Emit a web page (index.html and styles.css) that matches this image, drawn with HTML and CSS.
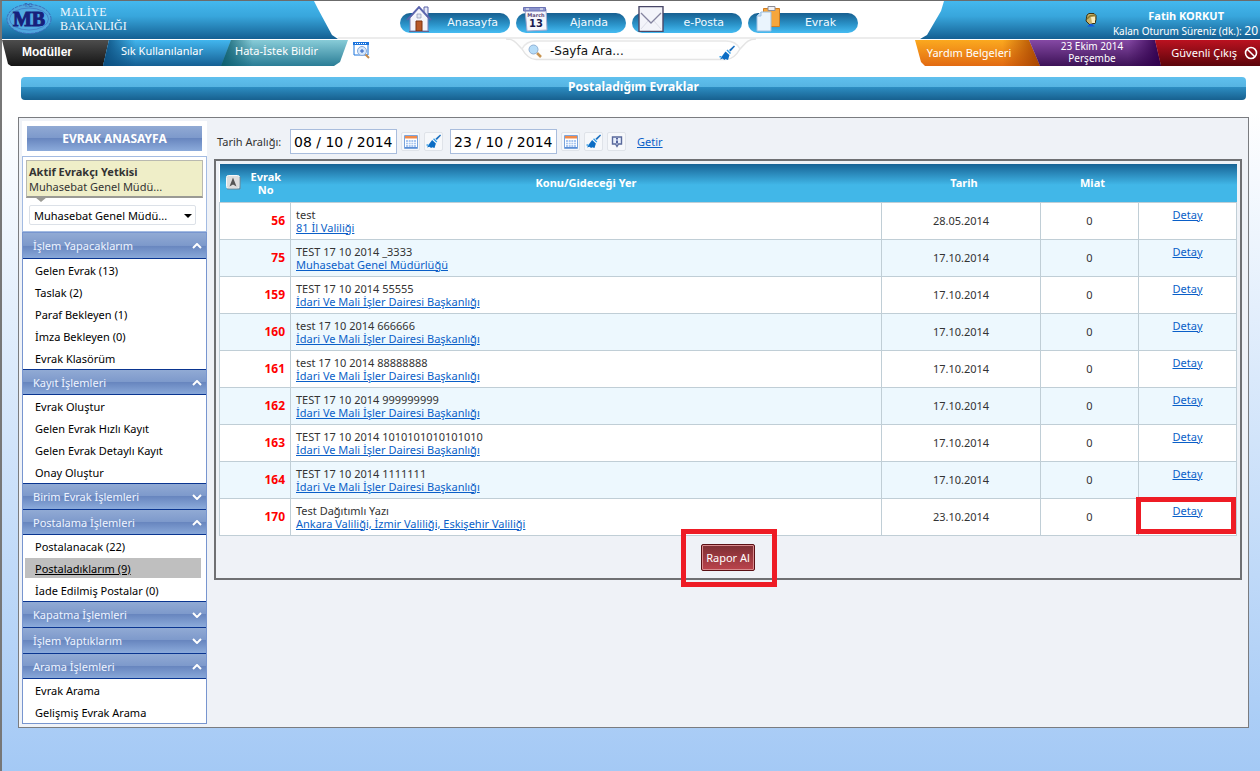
FILE: index.html
```html
<!DOCTYPE html>
<html lang="tr">
<head>
<meta charset="utf-8">
<title>Postaladığım Evraklar</title>
<link rel="stylesheet" href="styles.css">
</head>
<body>
<svg class="defs" aria-hidden="true">
  <symbol id="i-brush" viewBox="0 0 16 16"><path d="M14.500 .5l1 1-4.500 5-1.500-1.500z" fill="#1a6fc0"/><path d="M8 4.500l3.500 3.500-1 1-3.500-3.500z" fill="#2f9be8"/><path d="M6 6.500l4 3.500-1.500 5-2.500-1-1 1-2-1.500-2.500 1 2.500-4z" fill="#0a6cc4"/><path d="M0 11h2v1.500H0z" fill="#2f9be8"/></symbol>
  <symbol id="i-cal" viewBox="0 0 14 14"><path d="M.5.500h13v13H.5z" fill="#fff" stroke="#7aa4dc"/><path d="M1 1h12v2.500H1z" fill="#f08a4b"/><path d="M2 5h10v7H2z" fill="#a8c6f0"/><path d="M2 7.500h10M2 9.500h10M4.500 5v7M7 5v7M9.500 5v7" stroke="#fff" stroke-width=".7"/><path d="M1 12.500h12" stroke="#5b8ed6"/></symbol>
  <symbol id="i-up" viewBox="0 0 10 6"><path d="M1 5l4-4 4 4" fill="none" stroke="#fff" stroke-width="2"/></symbol>
  <symbol id="i-down" viewBox="0 0 10 6"><path d="M1 1l4 4 4-4" fill="none" stroke="#fff" stroke-width="2"/></symbol>
</svg>

<header class="top">
  <div class="band">
    <div class="brand">
      <svg class="logo" viewBox="0 0 46 34" role="img" aria-label="MB"><ellipse cx="23" cy="17" rx="22" ry="14.500" fill="#4fa6de" stroke="#3a6cba" stroke-dasharray="3 1"/><ellipse cx="23" cy="17" rx="19.500" ry="11" fill="#52abe2" stroke="#3a6cba" stroke-width=".6"/><text x="23" y="24" text-anchor="middle" class="logo-text">MB</text><text x="23" y="5" text-anchor="middle" class="logo-small">T.C.</text></svg>
      <span>MALİYE<br>BAKANLIĞI</span>
    </div>
    <nav class="nav">
      <a href="#"><svg viewBox="0 0 26 26"><path d="M18 1h4v10h-4z" fill="#e4e8f8" stroke="#5a63a8"/><path d="M4 12L13 2l9 10v13H4z" fill="#f4f5fb" stroke="#7b82b8"/><path d="M1 14L13 1l12 13" fill="none" stroke="#5a63ae" stroke-width="1.800"/><path d="M10 15h6v10h-6z" fill="#b85a28" stroke="#7b3513"/><path d="M11 8h4v4h-4z" fill="#dfe5ee" stroke="#8d96b8" stroke-width=".7"/><path d="M3 25.500h20" stroke="#606894"/></svg><span>Anasayfa</span></a>
      <a href="#"><svg viewBox="0 0 26 26"><path d="M3 3h21l1 21-20 1z" fill="#f6f7fc" stroke="#a6acd0"/><path d="M1.500 1.500h22v3.500h-22z" fill="#8c94cc" stroke="#6a72b4"/><path d="M4 3h3M18 3h3" stroke="#fff"/><text x="14" y="11" text-anchor="middle" class="cal-month">March</text><text x="14" y="21" text-anchor="middle" class="cal-day">13</text></svg><span>Ajanda</span></a>
      <a href="#"><svg viewBox="0 0 26 26"><path d="M1 .500h24v25H1z" fill="#f3f4fa" stroke="#4a4868" stroke-width="1.400"/><path d="M3 7l10 10L23 7" fill="none" stroke="#8584a0" stroke-width="1.300"/><path d="M3 23l7-8M23 23l-7-8" stroke="#dcdde8"/></svg><span>e-Posta</span></a>
      <a href="#"><svg viewBox="0 0 26 26"><path d="M9.500 2.500h16v18h-16z" fill="#f6a63c" stroke="#d07d20"/><path d="M14 .500h7v4h-7z" fill="#f2f2f4" stroke="#8c8c96"/><path d="M3 10l4-4h10v19H3z" fill="#eaf4fd" stroke="#9dc0e2"/><path d="M3 10h4V6" fill="#cfe3f5" stroke="#9dc0e2"/></svg><span>Evrak</span></a>
    </nav>
    <div class="user">
      <svg viewBox="0 0 12 14"><path d="M2 2l2-1.500h5l2 2v4l-1 4H8L5 12 1 8z" fill="#c9b46a" stroke="#3a3110"/><path d="M6 4h4v6H7z" fill="#fbeec0"/><path d="M2 6l3-3 5-1" stroke="#8a7730" stroke-width="1.500" fill="none"/><path d="M2 13.500l4-3 4 3z" fill="#1557e0"/></svg>
      <div class="who"><strong>Fatih KORKUT</strong><span>Kalan Oturum Süreniz (dk.): <b>20</b></span></div>
    </div>
  </div>
  <div class="tabs">
    <div class="tabs-left">
      <a class="tab black" href="#">Modüller</a>
      <a class="tab blue" href="#">Sık Kullanılanlar</a>
      <a class="tab teal" href="#">Hata-İstek Bildir</a>
      <button class="plain" type="button" aria-label="Yakınlaştır"><svg width="17" height="17" viewBox="0 0 17 17"><path d="M1 1h14v12H1z" fill="#fff" stroke="#1b74dd"/><path d="M0 1.500h16" stroke="#1b74dd" stroke-width="3"/><path d="M2 1.500h12" stroke="#fff" stroke-dasharray="1 1"/><circle cx="9" cy="9" r="4.500" fill="#d5e7fb" stroke="#86a9dc"/><path d="M9 7v4M7 9h4" stroke="#2b5fc0"/><path d="M12.500 12.500l3.500 3.500" stroke="#c58a4a" stroke-width="2"/></svg></button>
    </div>
    <form class="search">
      <svg class="search-shape" viewBox="0 0 250 23" preserveAspectRatio="none"><path d="M0 1c9 0 11 5 16 10 4 7 8 10.500 14 10.500h190c6 0 10-3.500 14-10.500 5-5 7-10 16-10" fill="#fdfdfd" stroke="#e4e4e4" stroke-width="1.500"/><path d="M16 11c3-6 7-8 14-8h190c7 0 11 2 14 8" fill="#fff" stroke="#e8e8e8" stroke-width="1.500"/></svg>
      <svg width="14" height="14" viewBox="0 0 14 14"><path d="M9 9l4 4" stroke="#c79350" stroke-width="2.500"/><circle cx="5.500" cy="5.500" r="4.500" fill="#b5dcf8" stroke="#8fb0d4"/></svg>
      <input type="text" value="-Sayfa Ara..." aria-label="Sayfa Ara">
      <button class="plain" type="reset" aria-label="Temizle"><svg width="17" height="16"><use href="#i-brush"/></svg></button>
    </form>
    <div class="tabs-right">
      <a class="tab orange" href="#">Yardım Belgeleri</a>
      <span class="tab purple">23 Ekim 2014<br>Perşembe</span>
      <a class="tab red" href="#">Güvenli Çıkış <svg width="14" height="14" viewBox="0 0 14 14"><circle cx="7" cy="7" r="5.500" fill="none" stroke="#fff" stroke-width="1.600"/><path d="M3 3l8 8" stroke="#fff" stroke-width="1.600"/></svg></a>
    </div>
  </div>
</header>

<h1 class="title">Postaladığım Evraklar</h1>

<main class="panel">
  <aside class="side">
    <div class="side-head"><a href="#">EVRAK ANASAYFA</a></div>
    <div class="role">
      <div class="tip"><strong>Aktif Evrakçı Yetkisi</strong><br>Muhasebat Genel Müdü...</div>
      <div class="pick"><select aria-label="Aktif Evrakçı Yetkisi"><option>Muhasebat Genel Müdü...</option></select></div>
    </div>
    <nav class="menu">
      <button type="button" class="first">İşlem Yapacaklarım<svg><use href="#i-up"/></svg></button>
      <ul><li><a href="#">Gelen Evrak (13)</a></li><li><a href="#">Taslak (2)</a></li><li><a href="#">Paraf Bekleyen (1)</a></li><li><a href="#">İmza Bekleyen (0)</a></li><li><a href="#">Evrak Klasörüm</a></li></ul>
      <button type="button">Kayıt İşlemleri<svg><use href="#i-up"/></svg></button>
      <ul><li><a href="#">Evrak Oluştur</a></li><li><a href="#">Gelen Evrak Hızlı Kayıt</a></li><li><a href="#">Gelen Evrak Detaylı Kayıt</a></li><li><a href="#">Onay Oluştur</a></li></ul>
      <button type="button">Birim Evrak İşlemleri<svg><use href="#i-down"/></svg></button>
      <button type="button">Postalama İşlemleri<svg><use href="#i-up"/></svg></button>
      <ul><li><a href="#">Postalanacak (22)</a></li><li><a class="on" href="#">Postaladıklarım (9)</a></li><li><a href="#">İade Edilmiş Postalar (0)</a></li></ul>
      <button type="button">Kapatma İşlemleri<svg><use href="#i-down"/></svg></button>
      <button type="button">İşlem Yaptıklarım<svg><use href="#i-down"/></svg></button>
      <button type="button">Arama İşlemleri<svg><use href="#i-up"/></svg></button>
      <ul><li><a href="#">Evrak Arama</a></li><li><a href="#">Gelişmiş Evrak Arama</a></li></ul>
    </nav>
  </aside>

  <section class="content">
    <form class="filter">
      <label for="from">Tarih Aralığı:</label>
      <input id="from" type="text" value="08 / 10 / 2014">
      <button class="tool" type="button" aria-label="Takvim"><svg width="14" height="14"><use href="#i-cal"/></svg></button>
      <button class="tool" type="button" aria-label="Temizle"><svg width="16" height="15"><use href="#i-brush"/></svg></button>
      <input id="to" class="second" type="text" value="23 / 10 / 2014" aria-label="Bitiş tarihi">
      <button class="tool" type="button" aria-label="Takvim"><svg width="14" height="14"><use href="#i-cal"/></svg></button>
      <button class="tool" type="button" aria-label="Temizle"><svg width="16" height="15"><use href="#i-brush"/></svg></button>
      <button class="tool" type="button" aria-label="Bilgi"><svg width="12" height="12" viewBox="0 0 12 12"><path d="M1.500 1h9v7h-3L6 10.500 4.500 8h-3z" fill="#e8effb" stroke="#5a6a9c" stroke-width="1.400"/><path d="M6 2v1.500M6 4.500v3" stroke="#2b3f86" stroke-width="1.600"/></svg></button>
      <a class="get" href="#">Getir</a>
    </form>
    <div class="box">
      <table>
        <colgroup><col class="c1"><col><col class="c3"><col class="c4"><col class="c5"></colgroup>
        <thead><tr>
          <th><div class="sort"><svg width="15" height="15" viewBox="0 0 15 15"><rect x=".5" y=".5" width="13" height="13" rx="2" fill="#dedede" stroke="#f8f8f8"/><path d="M1 14h13V2" fill="none" stroke="#6f8490"/><path d="M7 2.500l3.500 9L7 9.500l-3.500 2z" fill="#555"/></svg><span>Evrak<br>No</span></div></th>
          <th>Konu/Gideceği Yer</th><th>Tarih</th><th>Miat</th><th></th>
        </tr></thead>
        <tbody>
          <tr><td>56</td><td>test<br><a href="#">81 İl Valiliği</a></td><td>28.05.2014</td><td>0</td><td><a href="#">Detay</a></td></tr>
          <tr><td>75</td><td>TEST 17 10 2014 _3333<br><a href="#">Muhasebat Genel Müdürlüğü</a></td><td>17.10.2014</td><td>0</td><td><a href="#">Detay</a></td></tr>
          <tr><td>159</td><td>TEST 17 10 2014 55555<br><a href="#">İdari Ve Mali İşler Dairesi Başkanlığı</a></td><td>17.10.2014</td><td>0</td><td><a href="#">Detay</a></td></tr>
          <tr><td>160</td><td>test 17 10 2014 666666<br><a href="#">İdari Ve Mali İşler Dairesi Başkanlığı</a></td><td>17.10.2014</td><td>0</td><td><a href="#">Detay</a></td></tr>
          <tr><td>161</td><td>test 17 10 2014 88888888<br><a href="#">İdari Ve Mali İşler Dairesi Başkanlığı</a></td><td>17.10.2014</td><td>0</td><td><a href="#">Detay</a></td></tr>
          <tr><td>162</td><td>TEST 17 10 2014 999999999<br><a href="#">İdari Ve Mali İşler Dairesi Başkanlığı</a></td><td>17.10.2014</td><td>0</td><td><a href="#">Detay</a></td></tr>
          <tr><td>163</td><td>TEST 17 10 2014 1010101010101010<br><a href="#">İdari Ve Mali İşler Dairesi Başkanlığı</a></td><td>17.10.2014</td><td>0</td><td><a href="#">Detay</a></td></tr>
          <tr><td>164</td><td>TEST 17 10 2014 1111111<br><a href="#">İdari Ve Mali İşler Dairesi Başkanlığı</a></td><td>17.10.2014</td><td>0</td><td><a href="#">Detay</a></td></tr>
          <tr><td>170</td><td>Test Dağıtımlı Yazı<br><a href="#">Ankara Valiliği, İzmir Valiliği, Eskişehir Valiliği</a></td><td>23.10.2014</td><td>0</td><td class="marked"><a href="#">Detay</a></td></tr>
        </tbody>
      </table>
      <div class="actions"><span class="report"><button type="button">Rapor Al</button></span></div>
    </div>
  </section>
</main>
</body>
</html>
```
FILE: styles.css
```css
* { box-sizing: border-box; }
body {
  margin: 0;
  min-height: 100vh;
  border-top: 1px solid #6b6b6b;
  border-left: 2px solid #777;
  background: linear-gradient(#fff 0, #fff 110px, #a4c9f5 100%);
  font: 11px/13px "Noto Sans", "Open Sans", sans-serif;
  color: #333;
}
.defs { position: absolute; width: 0; height: 0; }
a { color: #0a5fc8; }
.plain { border: 0; padding: 0; background: none; line-height: 0; }

/* header */
.top { background: #fff; }
.band { display: flex; height: 38px; margin-bottom: 1px; }
.brand, .user { width: 336px; background: linear-gradient(#44b8ee, #38a6dc 40%, #145f92); color: #fff; }
.brand {
  display: flex; align-items: center; gap: 8px; padding: 0 0 2px 4px;
  clip-path: polygon(0 0, 312px 0, 316px 8px, 330px 34px, 100% 100%, 0 100%);
  font: 12px/14px "Liberation Serif", serif; color: #f2faff;
}
.logo { width: 46px; height: 34px; }
.logo-text { font: bold 20px "Liberation Serif", serif; fill: #17207c; stroke: #17207c; }
.logo-small { font: 5px "Liberation Sans", sans-serif; fill: #2b4f9c; }
.user {
  width: 340px; display: flex; justify-content: flex-end; gap: 16px;
  clip-path: polygon(24px 0, 100% 0, 100% 100%, 0 100%, 7px 34px, 21px 10px);
}
.user svg { width: 12px; height: 14px; margin-top: 12px; }
.who { position: relative; display: flex; flex-direction: column; justify-content: flex-end; align-items: flex-end; padding-right: 2px; line-height: 15px; white-space: nowrap; font-size: 10px; }
.who strong { padding-right: 34px; font-size: 11px; }
.who b { font-size: 12px; font-weight: normal; }
.nav { flex: 1; display: flex; justify-content: center; gap: 6px; padding-top: 12px; border-bottom: 2px solid #ececec; }
.nav a {
  display: flex; align-items: center; justify-content: space-between;
  width: 110px; height: 20px; padding: 0 12px 0 6px; border-radius: 10px;
  background: linear-gradient(#175f90, #2c96cc 60%, #46bcf2);
  color: #f1faff; text-decoration: none; font: 11px/20px "DejaVu Sans", sans-serif;
}
.nav svg { width: 26px; height: 26px; margin-top: -8px; }
.nav a:nth-child(n+2) span { padding-right: 6px; }
.nav a:nth-child(4) span { padding-right: 10px; }
.cal-month { font: bold 5px "DejaVu Sans", sans-serif; fill: #5d4b77; }
.cal-day { font: bold 10px "DejaVu Sans", sans-serif; fill: #17194e; }

.tabs { display: grid; grid-template-columns: 1fr auto 1fr; height: 26px; }
.tabs-left, .tabs-right { display: flex; }
.tabs-right { justify-content: flex-end; }
.tab { display: block; height: 26px; text-align: center; color: #fff; text-decoration: none; font-size: 12px; line-height: 22px; white-space: nowrap; }
.black { width: 107px; padding-right: 17px; background: linear-gradient(#4d4d4d, #151515); clip-path: polygon(0 0, 100% 0, 101px 100%, 9px 100%, 6px 24px); font: bold 12px/25px "Liberation Sans", sans-serif; }
.blue { width: 130px; margin-left: -6px; padding-right: 12px; font-size: 11px; background: linear-gradient(90deg, #0c4f80, transparent 25%), linear-gradient(#42b6ee, #155f93); clip-path: polygon(6px 0, 100% 0, 122px 100%, 0 100%); }
.teal { width: 127px; margin-left: -12px; padding-right: 16px; font-size: 11px; background: linear-gradient(90deg, #0e5f70, transparent 25%), linear-gradient(#88ccd8, #2a7d96); clip-path: polygon(10px 0, 100% 0, 119px 22px, 113px 100%, 0 100%); }
.tabs-left .plain { align-self: flex-start; margin: 2px 0 0 5px; }
.orange { width: 125px; padding-right: 17px; background: linear-gradient(270deg, #a84600, transparent 30%), linear-gradient(#fba91f, #e26a12); clip-path: polygon(0 0, 114px 0, 100% 100%, 10px 100%, 6px 22px); font-size: 11px; line-height: 25px; }
.purple { width: 132px; margin-left: -11px; padding-right: 6px; background: linear-gradient(270deg, #31004e, transparent 25%), linear-gradient(#8549a4, #3d1257); clip-path: polygon(0 0, 126px 0, 100% 100%, 11px 100%); font-size: 10px; line-height: 12px; }
.red { display: flex; align-items: center; justify-content: flex-end; gap: 7px; width: 105px; margin-left: -6px; padding-right: 2px; background: linear-gradient(#bb1220, #5c050b); clip-path: polygon(0 0, 100% 0, 100% 100%, 6px 100%); font-size: 11px; line-height: 26px; }
.search { position: relative; display: flex; align-items: center; width: 250px; height: 21px; padding: 0 20px 0 22px; }
.search > * { position: relative; }
.search .search-shape { position: absolute; left: 0; top: -2px; width: 100%; height: 23px; }
.search input { flex: 1; min-width: 0; margin-left: 8px; padding: 0; border: 0; background: none; font: 12px "DejaVu Sans", sans-serif; color: #111; }
.search .plain { align-self: flex-end; }

.title {
  margin: 11px 14px 0 19px; height: 23px; border-radius: 4px;
  background: linear-gradient(#5fc0ee, #56b4e2 43%, #2d8dc2 44%, #17608f);
  color: #fff; text-align: center; font-size: 12px; line-height: 20px;
}

/* panel */
.panel { display: flex; align-items: flex-start; gap: 7px; margin: 17px 11px 0 16px; padding: 3px 6px 3px 3px; border: 1px solid #7a7c80; background: #eff2f7; }
.side { width: 185px; flex: none; }
.side-head { height: 35px; padding: 5px; background: #fff; }
.side-head a, .menu button { background: linear-gradient(#91aad4, #7d99cb 48%, #6886bf 50%, #8cabdb); }
.side-head a { display: block; color: #fff; text-align: center; text-decoration: none; font-size: 12px; font-weight: bold; line-height: 25px; }
.role { height: 76px; padding: 3px; border: 1px solid #a3bbe2; background: #fff; }
.tip { position: relative; height: 38px; padding: 3px 2px; border: 1px solid #b9b9b0; border-bottom: 2px solid #9a9a94; background: #efeec8; line-height: 15px; }
.tip strong { font-size: 11px; }
.tip::after { content: ""; position: absolute; left: 8px; top: 36px; border: 6px solid transparent; border-top: 5px solid #9a9a94; border-bottom: 0; }
.pick { position: relative; margin: 7px 7px 0 3px; }
.pick select { display: block; width: 100%; height: 20px; padding: 0 4px; border: 1px solid #dce1e8; border-radius: 2px; appearance: none; background: #fff; font: inherit; color: #000; }
.pick::after { content: ""; position: absolute; right: 4px; top: 9px; border: 4px solid transparent; border-top-color: #000; border-bottom: 0; pointer-events: none; }
.menu { border: 1px solid #7795cf; border-top: 0; background: #fff; }
.menu button {
  display: flex; justify-content: space-between; align-items: center; width: 100%; height: 26px; padding: 0 4px 0 10px;
  border: 0; border-top: 1px solid #0a3590; color: #eef4ff; font: 11px/24px "Noto Sans", "Open Sans", sans-serif;
}
.menu .first { height: 27px; border-top-color: #7795cf; }
.menu button svg { width: 10px; height: 6px; }
.menu ul { margin: -1px 0 0; padding: 0 5px 0 2px; list-style: none; border-top: 1px solid #0a3590; }
.menu li { height: 22px; padding-top: 1px; }
.menu li a { display: block; height: 20px; padding-left: 10px; line-height: 22px; color: #000; text-decoration: none; }
.menu li .on { background: #bfbfbf; text-decoration: underline; }

.content { flex: 1; min-width: 0; }
.filter { display: flex; align-items: center; height: 38px; padding: 3px 0 0 3px; }
.filter label { width: 73px; white-space: nowrap; }
.filter input { width: 107px; height: 25px; padding: 0 3px; border: 1px solid #a9bddd; background: #fff; font: 14px "DejaVu Sans", sans-serif; color: #000; }
.filter .second { margin-left: 7px; }
.tool { display: flex; align-items: center; justify-content: center; width: 19px; height: 19px; margin-left: 4px; padding: 0; border: 1px solid #dfe3e9; border-radius: 2px; background: #f6f8fb; }
.get { margin-left: 11px; }
.box { border: 2px solid #6f7073; padding: 3px; }
table { width: 100%; border-collapse: collapse; table-layout: fixed; background: #fff; }
.c1 { width: 71px; } .c3 { width: 159px; } .c4 { width: 98px; } .c5 { width: 98px; }
thead { background: linear-gradient(#176294, #41b7e8 55%, #41b7e8); color: #fff; }
th { height: 38px; padding: 0; }
th:nth-child(3), th:nth-child(4) { padding-left: 6px; }
.sort { display: flex; align-items: center; gap: 10px; padding-left: 6px; }
td { height: 37px; padding: 0 5px; border: 1px solid #c0ced6; text-align: center; }
tbody tr:nth-child(even) { background: #edf8fe; }
td:first-child { text-align: right; color: #f00; font-size: 12px; font-weight: bold; }
td:nth-child(2) { text-align: left; }
td:last-child { position: relative; vertical-align: top; padding-top: 5px; }
.marked::after, .report::after { content: ""; position: absolute; border: 5px solid #ee1c25; pointer-events: none; }
.marked::after { inset: -2px 0 1px -3px; }
.actions { height: 39px; padding-top: 8px; text-align: center; }
.report { position: relative; display: inline-block; }
.report::after { inset: -15px -22px -16px -20px; }
.report button { display: block; width: 54px; height: 27px; padding: 0; border: 1px solid #5a1015; border-radius: 2px; box-shadow: inset 0 0 0 1px #d98b8e; background: linear-gradient(#7d2f34, #bb434c); color: #fff; font: 11px "Noto Sans", "Open Sans", sans-serif; white-space: nowrap; }
```
